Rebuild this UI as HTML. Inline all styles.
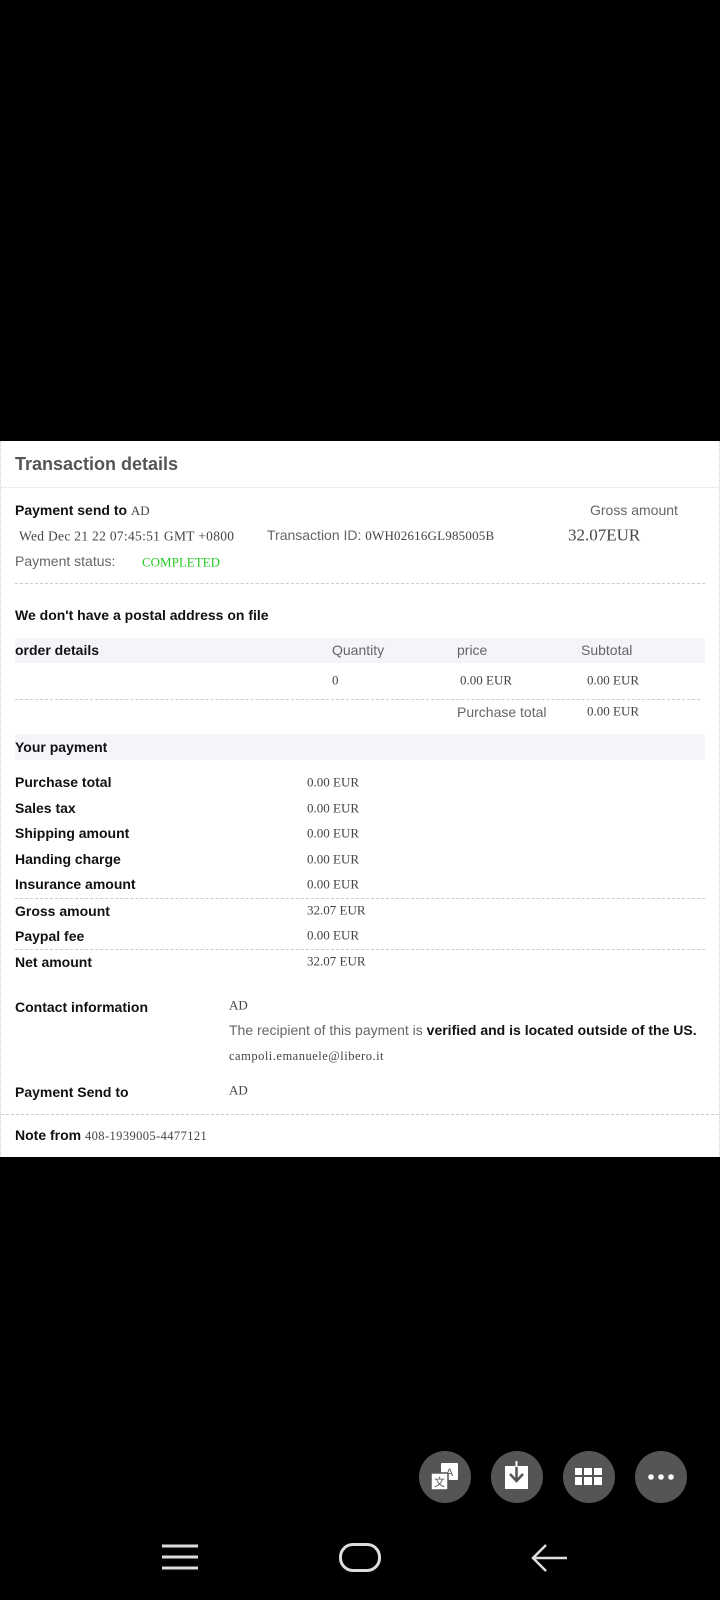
<!DOCTYPE html>
<html><head><meta charset="utf-8"><style>
*{margin:0;padding:0;box-sizing:border-box}
body{width:720px;height:1600px;background:#000;position:relative;overflow:hidden;font-family:"Liberation Sans",sans-serif}
.p{position:absolute;left:0;top:441px;width:720px;height:716px;background:#fff;border-left:1px dotted #ccc;border-right:1px dotted #ccc}
.t{position:absolute;white-space:nowrap;line-height:1;transform:translateY(-50%)}
.b{font-weight:bold;font-size:14px;color:#111}
.s{font-family:"Liberation Serif",serif;font-size:13px;color:#444}
.g{font-size:14px;color:#666}
.d{position:absolute;left:15px;right:15px;border-top:1px dashed #ccc}
.band{position:absolute;left:15px;width:690px;background:#f4f5fb}
.c{position:absolute;width:52px;height:52px;border-radius:50%;background:#555;top:1451px}
</style></head><body>
<div class="p"></div>
<div class="t" style="left:15px;top:464px;font-weight:bold;font-size:18px;color:#555">Transaction details</div>
<div style="position:absolute;left:1px;right:1px;top:487px;border-top:1px dotted #ddd"></div>
<div class="t b" style="left:15px;top:510px">Payment send to <span class="s" style="font-weight:normal">AD</span></div>
<div class="t g" style="left:590px;top:510px">Gross amount</div>
<div class="t s" style="left:19px;top:536px;font-size:13.5px;letter-spacing:0.3px">Wed Dec 21 22 07:45:51 GMT +0800</div>
<div class="t g" style="left:267px;top:535px">Transaction ID: <span class="s" style="font-size:13px;letter-spacing:0.2px">0WH02616GL985005B</span></div>
<div class="t s" style="left:568px;top:535px;font-size:17px">32.07EUR</div>
<div class="t g" style="left:15px;top:561px">Payment status:</div>
<div class="t s" style="left:142px;top:562px;color:#2c2;font-size:13px">COMPLETED</div>
<div class="d" style="top:583px"></div>
<div class="t b" style="left:15px;top:615px">We don't have a postal address on file</div>
<div class="band" style="top:638px;height:25px"></div>
<div class="t b" style="left:15px;top:650px">order details</div>
<div class="t g" style="left:332px;top:650px">Quantity</div>
<div class="t g" style="left:457px;top:650px">price</div>
<div class="t g" style="left:581px;top:650px">Subtotal</div>
<div class="t s" style="left:332px;top:680px">0</div>
<div class="t s" style="left:460px;top:680px">0.00 EUR</div>
<div class="t s" style="left:587px;top:680px">0.00 EUR</div>
<div class="d" style="top:699px;right:20px"></div>
<div class="t g" style="left:457px;top:712px">Purchase total</div>
<div class="t s" style="left:587px;top:711px">0.00 EUR</div>
<div class="band" style="top:734px;height:26px"></div>
<div class="t b" style="left:15px;top:747px">Your payment</div>
<div class="t b" style="left:15px;top:782px">Purchase total</div><div class="t s" style="left:307px;top:782px">0.00 EUR</div>
<div class="t b" style="left:15px;top:808px">Sales tax</div><div class="t s" style="left:307px;top:808px">0.00 EUR</div>
<div class="t b" style="left:15px;top:833px">Shipping amount</div><div class="t s" style="left:307px;top:833px">0.00 EUR</div>
<div class="t b" style="left:15px;top:859px">Handing charge</div><div class="t s" style="left:307px;top:859px">0.00 EUR</div>
<div class="t b" style="left:15px;top:884px">Insurance amount</div><div class="t s" style="left:307px;top:884px">0.00 EUR</div>
<div class="d" style="top:898px"></div>
<div class="t b" style="left:15px;top:911px">Gross amount</div><div class="t s" style="left:307px;top:910px">32.07 EUR</div>
<div class="t b" style="left:15px;top:936px">Paypal fee</div><div class="t s" style="left:307px;top:935px">0.00 EUR</div>
<div class="d" style="top:949px"></div>
<div class="t b" style="left:15px;top:962px">Net amount</div><div class="t s" style="left:307px;top:961px">32.07 EUR</div>
<div class="t b" style="left:15px;top:1007px">Contact information</div>
<div class="t s" style="left:229px;top:1005px">AD</div>
<div class="t g" style="left:229px;top:1030px">The recipient of this payment is <b style="color:#111">verified and is located outside of the US.</b></div>
<div class="t s" style="left:229px;top:1056px;font-size:12.5px;letter-spacing:0.5px">campoli.emanuele@libero.it</div>
<div class="t b" style="left:15px;top:1092px">Payment Send to</div>
<div class="t s" style="left:229px;top:1090px">AD</div>
<div style="position:absolute;left:1px;right:1px;top:1114px;border-top:1px dashed #ccc"></div>
<div class="t b" style="left:15px;top:1135px">Note from <span class="s" style="font-weight:normal;font-size:12.5px;letter-spacing:0.4px">408-1939005-4477121</span></div>

<div class="c" style="left:419px"><svg width="52" height="52" viewBox="0 0 52 52"><rect x="22" y="12" width="17" height="17" rx="1" fill="#fff"/><text x="30.5" y="25" font-size="11" font-family="Liberation Sans" text-anchor="middle" fill="#555">A</text><rect x="12" y="22" width="17" height="17" rx="1" fill="#fff" stroke="#555" stroke-width="1.5"/><text x="20.5" y="35" font-size="11" font-family="Liberation Sans" text-anchor="middle" fill="#555">文</text></svg></div>
<div class="c" style="left:491px"><svg width="52" height="52" viewBox="0 0 52 52"><rect x="14" y="15" width="23" height="23" fill="#fff"/><path d="M25.5 10V30M19 23l6.5 7 6.5-7" stroke="#555" stroke-width="2.5" fill="none"/><path d="M25.5 10V16" stroke="#fff" stroke-width="2"/></svg></div>
<div class="c" style="left:563px"><svg width="52" height="52" viewBox="0 0 52 52" fill="#fff"><rect x="12" y="17" width="7" height="7"/><rect x="21" y="17" width="8" height="7"/><rect x="31" y="17" width="8" height="7"/><rect x="12" y="26" width="7" height="8"/><rect x="21" y="26" width="8" height="8"/><rect x="31" y="26" width="8" height="8"/></svg></div>
<div class="c" style="left:635px"><svg width="52" height="52" viewBox="0 0 52 52" fill="#fff"><circle cx="16" cy="26" r="2.8"/><circle cx="26" cy="26" r="2.8"/><circle cx="36" cy="26" r="2.8"/></svg></div>

<svg style="position:absolute;left:160px;top:1543px" width="40" height="28"><path d="M2 3H38M2 14H38M2 25H38" stroke="#ddd" stroke-width="3"/></svg>
<div style="position:absolute;left:339px;top:1543px;width:42px;height:29px;border:3px solid #ddd;border-radius:14px"></div>
<svg style="position:absolute;left:530px;top:1542px" width="40" height="32"><path d="M37 16H4M16 3L3 16 16 29" stroke="#ddd" stroke-width="2.5" fill="none"/></svg>
</body></html>
